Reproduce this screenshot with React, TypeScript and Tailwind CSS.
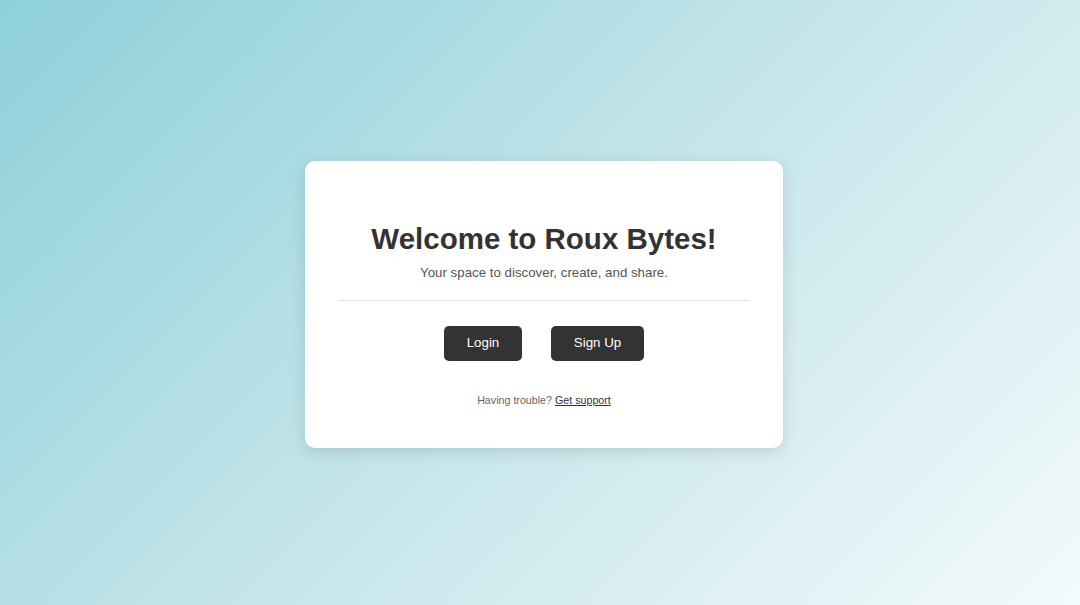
export default function App() {
  return (
    <div
      className="flex h-[605px] w-full items-center justify-center bg-[linear-gradient(135deg,#8ed0da_0%,#c4e5ea_50%,#f3fafb_100%)]"
      style={{ fontFamily: '"Liberation Sans", Arial, sans-serif' }}
    >
      <div className="ml-[8px] mt-[3px] w-[478px] rounded-[10px] bg-white px-[33px] pb-[41px] pt-[61px] text-center shadow-[0_4px_16px_rgba(0,0,0,0.12)]">
        <h1 className="text-[29.5px] font-bold leading-[34px] text-[#333]">
          Welcome to Roux Bytes!
        </h1>
        <p className="mt-[9px] text-[13.3px] leading-[16px] text-[#555]">
          Your space to discover, create, and share.
        </p>
        <hr className="mt-[19px] border-t border-[#e6e6e6]" />
        <div className="mt-[25px] flex justify-center gap-[29px]">
          <button className="h-[35px] w-[78px] rounded-[5px] bg-[#333] text-[13.3px] text-white">
            Login
          </button>
          <button className="h-[35px] w-[93px] rounded-[5px] bg-[#333] text-[13.3px] text-white">
            Sign Up
          </button>
        </div>
        <p className="mt-[33px] text-[10.7px] leading-[13px] text-[#666]">
          Having trouble?{" "}
          <a href="#" className="text-[#333] underline">
            Get support
          </a>
        </p>
      </div>
    </div>
  );
}
